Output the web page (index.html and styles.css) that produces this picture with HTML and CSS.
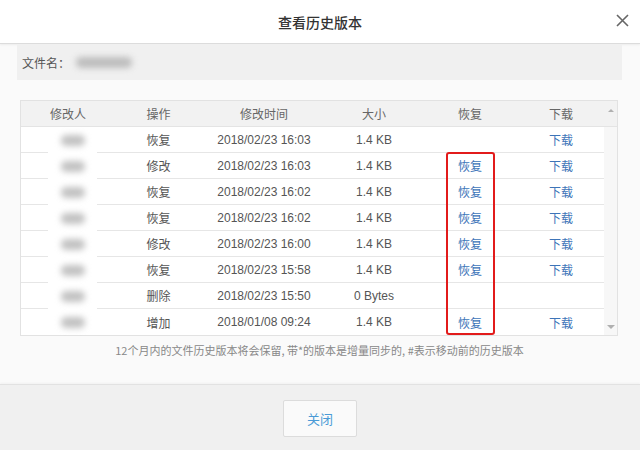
FILE: index.html
```html
<!DOCTYPE html>
<html lang="zh">
<head>
<meta charset="utf-8">
<title>查看历史版本</title>
<link rel="stylesheet" href="styles.css">
</head>
<body>
<div class="dialog">
  <div class="header">
    <span></span>
    <h1 class="title">查看历史版本</h1>
    <span class="close">
      <svg width="13" height="13" viewBox="0 0 13 13"><path d="M1 1 L12 12 M12 1 L1 12" stroke="#666" stroke-width="1.6" fill="none"/></svg>
    </span>
  </div>
  <div class="content">
    <div class="filebar"><span>文件名：</span><span class="fname-blur"></span></div>
    <div class="tablewrap">
      <div class="thead">
        <div class="c c1">修改人</div><div class="c c2">操作</div><div class="c c3">修改时间</div><div class="c c4">大小</div><div class="c c5">恢复</div><div class="c c6">下载</div>
        <div class="sb-up"><span class="tri-up"></span></div>
      </div>
      <div class="tbody">
        <div class="rows">
          <div class="row"><div class="c c1"></div><div class="c c2">恢复</div><div class="c c3">2018/02/23 16:03</div><div class="c c4">1.4 KB</div><div class="c c5"></div><div class="c c6"><a>下载</a></div></div>
          <div class="row"><div class="c c1"></div><div class="c c2">修改</div><div class="c c3">2018/02/23 16:03</div><div class="c c4">1.4 KB</div><div class="c c5"><a>恢复</a></div><div class="c c6"><a>下载</a></div></div>
          <div class="row"><div class="c c1"></div><div class="c c2">恢复</div><div class="c c3">2018/02/23 16:02</div><div class="c c4">1.4 KB</div><div class="c c5"><a>恢复</a></div><div class="c c6"><a>下载</a></div></div>
          <div class="row"><div class="c c1"></div><div class="c c2">恢复</div><div class="c c3">2018/02/23 16:02</div><div class="c c4">1.4 KB</div><div class="c c5"><a>恢复</a></div><div class="c c6"><a>下载</a></div></div>
          <div class="row"><div class="c c1"></div><div class="c c2">修改</div><div class="c c3">2018/02/23 16:00</div><div class="c c4">1.4 KB</div><div class="c c5"><a>恢复</a></div><div class="c c6"><a>下载</a></div></div>
          <div class="row"><div class="c c1"></div><div class="c c2">恢复</div><div class="c c3">2018/02/23 15:58</div><div class="c c4">1.4 KB</div><div class="c c5"><a>恢复</a></div><div class="c c6"><a>下载</a></div></div>
          <div class="row"><div class="c c1"></div><div class="c c2">删除</div><div class="c c3">2018/02/23 15:50</div><div class="c c4">0 Bytes</div><div class="c c5"></div><div class="c c6"></div></div>
          <div class="row"><div class="c c1"></div><div class="c c2">增加</div><div class="c c3">2018/01/08 09:24</div><div class="c c4">1.4 KB</div><div class="c c5"><a>恢复</a></div><div class="c c6"><a>下载</a></div></div>
        </div>
        <div class="sb-track"><span class="tri-down"></span></div>
      </div>
      <div class="blurcol">
        <span class="blob"></span><span class="blob"></span><span class="blob"></span><span class="blob"></span>
        <span class="blob"></span><span class="blob"></span><span class="blob"></span><span class="blob"></span>
      </div>
      <div class="redbox"></div>
    </div>
    <p class="note">12个月内的文件历史版本将会保留, 带*的版本是增量同步的, #表示移动前的历史版本</p>
  </div>
  <div class="footer">
    <button class="btn">关闭</button>
  </div>
</div>
</body>
</html>
```
FILE: styles.css
```css
* { box-sizing: border-box; }
html, body { margin: 0; padding: 0; }
body {
  background: #fafafa;
  font-family: "Liberation Sans", "Noto Sans CJK SC", sans-serif;
  color: #555;
}
.dialog {
  width: 640px;
  height: 450px;
  display: flex;
  flex-direction: column;
  overflow: hidden;
}
.header {
  height: 44px;
  flex: none;
  background: #fff;
  border-bottom: 1px solid #dcdcdc;
  box-shadow: 0 1px 2px rgba(0,0,0,0.06);
  display: grid;
  grid-template-columns: 1fr auto 1fr;
  align-items: center;
}
.title {
  margin: 0;
  font-size: 14px;
  font-weight: 500;
  color: #333;
  font-family: "Noto Sans CJK SC", sans-serif;
}
.close {
  justify-self: end;
  margin-right: 11px;
  display: flex;
  margin-top: -2px;
}
.content {
  flex: 1;
  padding: 0 18px 0 17px;
  display: flex;
  flex-direction: column;
}
.filebar {
  height: 36px;
  background: #f0f0f0;
  display: flex;
  align-items: center;
  padding-left: 5px;
  font-size: 12px;
  color: #555;
  font-family: "Noto Sans CJK SC", sans-serif;
}
.fname-blur {
  width: 56px;
  height: 11px;
  background: #bdbdbd;
  filter: blur(3px);
  margin-left: 6px;
  border-radius: 5px;
}
.tablewrap {
  position: relative;
  margin: 20px 0 0 3px;
  width: 598px;
  border: 1px solid #e2e2e2;
  background: #f7f7f7;
  font-size: 12px;
}
.thead {
  display: flex;
  height: 26px;
  background: #f2f2f2;
  border-bottom: 1px solid #e4e4e4;
  color: #666;
  font-family: "Noto Sans CJK SC", sans-serif;
}
.c {
  display: flex;
  align-items: center;
  justify-content: center;
  height: 100%;
}
.c1 { width: 94px; }
.c2 { width: 87px; }
.c3 { width: 124px; }
.c4 { width: 96px; }
.c5 { width: 96px; }
.c6 { width: 86px; }
.sb-up {
  flex: 1;
  display: flex;
  justify-content: center;
  padding-top: 8px;
}
.tri-up {
  width: 0; height: 0;
  border-left: 3px solid transparent;
  border-right: 3px solid transparent;
  border-bottom: 3px solid #b0b0b0;
}
.tri-down {
  width: 0; height: 0;
  border-left: 4px solid transparent;
  border-right: 4px solid transparent;
  border-top: 4px solid #b0b0b0;
}
.tbody {
  display: flex;
}
.rows {
  width: 583px;
  background: #fff;
}
.row {
  display: flex;
  height: 26px;
  border-bottom: 1px solid #e6e6e6;
  color: #555;
}
.row:last-child { border-bottom: none; }
.row .c2 { font-family: "Noto Sans CJK SC", sans-serif; }
.row a {
  color: #3d74b8;
  font-family: "Noto Sans CJK SC", sans-serif;
  cursor: pointer;
}
.sb-track {
  flex: 1;
  display: flex;
  justify-content: center;
  align-items: flex-end;
  padding-bottom: 6px;
}
.blurcol {
  position: absolute;
  left: 27px;
  top: 27px;
  width: 49px;
  height: 207px;
  background: #fff;
  display: flex;
  flex-direction: column;
  align-items: center;
}
.blob {
  flex: none;
  width: 24px;
  height: 11px;
  margin: 7px 0 8px;
  background: #c2c2c2;
  border-radius: 5px;
  filter: blur(3px);
}
.redbox {
  position: absolute;
  left: 425px;
  top: 51px;
  width: 49px;
  height: 183px;
  border: 2px solid #e21b1b;
  border-radius: 3px;
}
.note {
  margin: 6px 0 0;
  text-align: center;
  font-size: 11px;
  color: #888;
  font-family: "Noto Sans CJK SC", sans-serif;
}
.footer {
  height: 66px;
  flex: none;
  background: #f0f0f0;
  border-top: 1px solid #e2e2e2;
  box-shadow: 0 -1px 2px rgba(0,0,0,0.04);
  display: flex;
  justify-content: center;
  padding-top: 15px;
}
.btn {
  width: 74px;
  height: 37px;
  background: #fafafa;
  border: 1px solid #dcdcdc;
  border-radius: 2px;
  color: #4a9ad6;
  font-size: 13px;
  font-family: "Noto Sans CJK SC", sans-serif;
  padding: 0;
}
```
